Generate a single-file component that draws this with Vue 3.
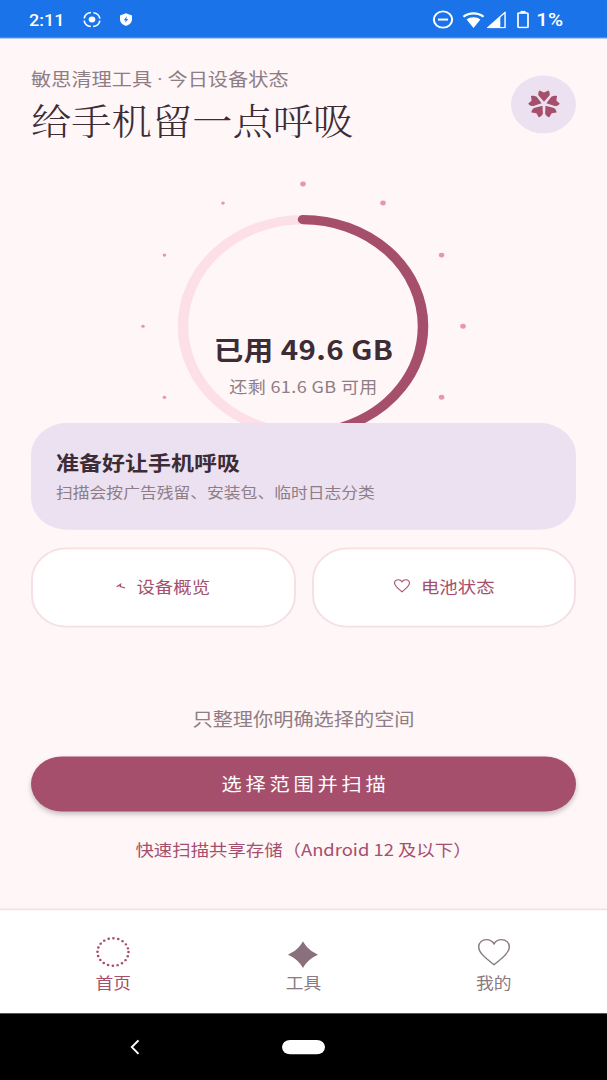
<script setup>
import { computed } from 'vue'

const usedGb = 49.6
const freeGb = 61.6

const ringRadius = 120
const circumference = 2 * Math.PI * ringRadius

const progressDash = computed(() => {
  const part = usedGb / (usedGb + freeGb)
  return `${circumference * part} ${circumference}`
})

// 12 dots around the ring, the ones on the right are a bit bigger
const dots = Array.from({ length: 12 }, (_, i) => {
  const angle = (i * 30 * Math.PI) / 180
  return {
    x: 303 + 160 * Math.sin(angle),
    y: 204 - 160 * Math.cos(angle),
    r: i < 6 ? 2.8 : 1.8,
  }
})

const petals = [0, 72, 144, 216, 288]

const tabs = [
  { key: 'home', label: '首页' },
  { key: 'tools', label: '工具' },
  { key: 'mine', label: '我的' },
]
</script>

<template>
  <div class="viewport">
    <div class="screen">
      <header class="status">
        <span class="status__time">2:11</span>
        <svg class="status__record" viewBox="0 0 24 24" fill="none" stroke="#fff" aria-hidden="true">
          <circle cx="12" cy="12" r="4" fill="#fff" stroke="none" />
          <circle cx="12" cy="12" r="9.5" stroke-width="2" stroke-dasharray="12 2.9" stroke-dashoffset="-1.4" />
        </svg>
        <svg class="status__shield" viewBox="0 0 24 24" aria-hidden="true">
          <path d="M12 1.5 3 5v6.5c0 5.4 3.8 9.7 9 11 5.200-1.300 9-5.600 9-11V5z" fill="#fff" />
          <path d="M13.200 6.500 8.800 13h2.700l-.8 4.500L15.200 11h-2.700z" fill="#1a73e8" />
        </svg>
        <span class="status__spacer"></span>
        <svg class="status__dnd" viewBox="0 0 24 24" aria-hidden="true">
          <circle cx="12" cy="12" r="10" fill="none" stroke="#fff" stroke-width="2.200" />
          <rect x="6.500" y="10.800" width="11" height="2.400" fill="#fff" />
        </svg>
        <svg class="status__wifi" viewBox="0 0 24 20" preserveAspectRatio="none" aria-hidden="true">
          <path d="M1.500 6.200C7.500 .8 16.500 .8 22.500 6.200" fill="none" stroke="#fff" stroke-width="2.400" />
          <path d="M12 19.500 4.800 9.300c4.300-3.300 10.100-3.300 14.400 0z" fill="#fff" />
        </svg>
        <svg class="status__signal" viewBox="0 0 20 20" aria-hidden="true">
          <path d="M19 1v18H1z" fill="none" stroke="#fff" stroke-width="1.500" />
          <path d="M14 6v13H1z" fill="#fff" />
        </svg>
        <svg class="status__battery" viewBox="0 0 12 20" aria-hidden="true">
          <rect x="3.500" y="0" width="5" height="3" fill="#fff" />
          <rect x="1" y="2.500" width="10" height="16.500" rx="1" fill="none" stroke="#fff" stroke-width="1.700" />
        </svg>
        <span class="status__percent">1%</span>
      </header>

      <main class="home">
        <section class="intro">
          <div class="intro__text">
            <p class="intro__sub">敏思清理工具<span class="intro__dot"> · </span>今日设备状态</p>
            <h1 class="intro__title">给手机留一点呼吸</h1>
          </div>
          <div class="intro__badge">
            <svg viewBox="-16 -16 32 32" aria-hidden="true">
              <path
                v-for="deg in petals"
                :key="deg"
                :transform="`rotate(${deg})`"
                d="M0-2.500-5.500-9.500C-6.200-11.500-5.500-14-4.500-15.200L0-13l4.500-2.200C5.500-14 6.200-11.500 5.500-9.500z"
                fill="#a64f6d"
              />
            </svg>
          </div>
        </section>

        <section class="ring">
          <svg class="ring__svg" viewBox="0 0 607 400" aria-hidden="true">
            <circle
              v-for="(dot, i) in dots"
              :key="i"
              :cx="dot.x"
              :cy="dot.y"
              :r="dot.r"
              fill="#e796b0"
            />
            <circle cx="303" cy="204" :r="ringRadius" fill="none" stroke="#fddfe7" stroke-width="10.500" />
            <circle
              cx="303"
              cy="204"
              :r="ringRadius"
              fill="none"
              stroke="#a64f6d"
              stroke-width="10.500"
              stroke-linecap="round"
              :stroke-dasharray="progressDash"
              transform="rotate(-90 303 204)"
            />
          </svg>
          <div class="ring__label">
            <div class="ring__used">已用 {{ usedGb }} GB</div>
            <div class="ring__free">还剩 {{ freeGb }} GB 可用</div>
          </div>
        </section>

        <section class="ready">
          <h2 class="ready__title">准备好让手机呼吸</h2>
          <p class="ready__sub">扫描会按广告残留、安装包、临时日志分类</p>
        </section>

        <div class="shortcuts">
          <button class="shortcut" type="button">
            <svg class="shortcut__spark" viewBox="0 0 10 10" aria-hidden="true">
              <path d="M.8 6 4.600 3.200 4.200 6 9.200 7.500" fill="none" stroke="#a64f6d" stroke-width="1.300" />
            </svg>
            <span>设备概览</span>
          </button>
          <button class="shortcut" type="button">
            <svg class="shortcut__heart" viewBox="0 0 24 24" aria-hidden="true">
              <path
                d="M12 21C5 15 2 11.800 2 8c0-3 2.300-5.200 5-5.200 2 0 4 1.200 5 3.200 1-2 3-3.200 5-3.200 2.700 0 5 2.200 5 5.200 0 3.800-3 7-10 13z"
                fill="none"
                stroke="#a64f6d"
                stroke-width="1.500"
              />
            </svg>
            <span>电池状态</span>
          </button>
        </div>

        <p class="note">只整理你明确选择的空间</p>
        <button class="scan" type="button">选择范围并扫描</button>
        <a class="quick">快速扫描共享存储（Android 12 及以下）</a>
      </main>

      <nav class="tabs">
        <div
          v-for="tab in tabs"
          :key="tab.key"
          class="tab"
          :class="{ 'tab--active': tab.key === 'home' }"
        >
          <div class="tab__icon">
            <svg v-if="tab.key === 'home'" width="36" height="36" viewBox="0 0 36 36" aria-hidden="true">
              <circle
                cx="18"
                cy="18"
                r="15.500"
                fill="none"
                stroke="#a64f6d"
                stroke-width="2.700"
                stroke-linecap="round"
                stroke-dasharray="0 4.870"
              />
            </svg>
            <svg v-else-if="tab.key === 'tools'" width="30" height="30" viewBox="0 0 30 30" aria-hidden="true">
              <path d="M15 0C18.500 7 23 11.500 30 15 23 18.500 18.500 23 15 30 11.500 23 7 18.500 0 15 7 11.500 11.500 7 15 0z" fill="#8a6f7c" />
            </svg>
            <svg v-else width="36" height="36" viewBox="0 0 24 24" aria-hidden="true">
              <path
                d="M12 21.500C5 15.500 1.800 12 1.800 8c0-3 2.300-5.300 5.200-5.300 2 0 4 1.200 5 3.200 1-2 3-3.200 5-3.200 2.900 0 5.200 2.300 5.200 5.300 0 4-3.200 7.500-10.200 13.500z"
                fill="none"
                stroke="#8a7a81"
                stroke-width="1"
              />
            </svg>
          </div>
          <span class="tab__label">{{ tab.label }}</span>
        </div>
      </nav>

      <footer class="sysbar">
        <svg class="sysbar__back" viewBox="0 0 10 18" aria-hidden="true">
          <path d="M8.500 1.500 1.800 9l6.700 7.500" fill="none" stroke="#fff" stroke-width="2" />
        </svg>
        <span class="sysbar__home"></span>
      </footer>
    </div>
  </div>
</template>

<style scoped>
.viewport {
  width: 607px;
  height: 1080px;
  overflow: hidden;
}

/* the capture is squeezed vertically, so the whole screen is laid out at 1215 and scaled */
.screen {
  display: flex;
  flex-direction: column;
  width: 607px;
  height: 1215px;
  background: #fef6f7;
  color: #3d2c35;
  font-family: 'Noto Sans CJK SC', 'Noto Sans', sans-serif;
  transform: scaleY(0.8889);
  transform-origin: top left;
}

.status {
  display: flex;
  flex: 0 0 43px;
  align-items: center;
  box-sizing: border-box;
  padding: 2px 44px 0 29px;
  background: #1a73e8;
  border-bottom: 1px solid #5b9bf0;
  color: #fff;
  font-family: Roboto, sans-serif;
  font-size: 18px;
  font-weight: 500;
}

.status__time {
  width: 34px;
}

.status__record {
  width: 20px;
  height: 20px;
  margin-left: 19px;
}

.status__shield {
  width: 16px;
  height: 16px;
  margin-left: 16px;
}

.status__spacer {
  flex: 1;
}

.status__dnd {
  width: 22px;
  height: 22px;
}

.status__wifi {
  width: 23px;
  height: 19px;
  margin-left: 8px;
}

.status__signal {
  width: 19px;
  height: 19px;
  margin-left: 2px;
}

.status__battery {
  width: 12px;
  height: 20px;
  margin-left: 11px;
}

.status__percent {
  margin-left: 7px;
  font-size: 20.5px;
  font-weight: 500;
}

.home {
  display: flex;
  flex: 1;
  flex-direction: column;
  min-height: 0;
  padding: 0 31px;
}

.intro {
  display: flex;
  flex: 0 0 120px;
  align-items: center;
  justify-content: space-between;
  box-sizing: border-box;
  padding-top: 32px;
}

.intro__sub {
  height: 28px;
  margin: 0;
  color: #8f7d85;
  font-size: 20.2px;
  line-height: 28px;
}

.intro__dot {
  font-family: Roboto, sans-serif;
  white-space: pre;
}

.intro__title {
  margin: 4px 0 0;
  color: #3d2c35;
  font-family: 'Noto Serif CJK SC', 'Noto Sans CJK SC', serif;
  font-size: 40.3px;
  font-weight: 300;
  line-height: 56px;
}

.intro__badge {
  display: flex;
  align-items: center;
  justify-content: center;
  width: 65px;
  height: 65px;
  margin-top: -4px;
  border-radius: 50%;
  background: #ebe1f1;
}

.intro__badge svg {
  width: 32px;
  height: 32px;
}

.ring {
  position: relative;
  flex: 0 0 313px;
  margin: 0 -31px;
  overflow: hidden;
}

.ring__svg {
  display: block;
  width: 607px;
  height: 400px;
}

.ring__label {
  position: absolute;
  top: 209px;
  left: 0;
  width: 100%;
  text-align: center;
}

.ring__used {
  color: #3d2c35;
  font-size: 29.5px;
  font-weight: 700;
  line-height: 40px;
  letter-spacing: 0.4px;
}

.ring__free {
  margin-top: 9px;
  color: #8f7d85;
  font-size: 18px;
  line-height: 26px;
  letter-spacing: 0.4px;
}

.ready {
  box-sizing: border-box;
  height: 120px;
  padding: 28px 25px 0;
  border-radius: 36px;
  background: #ebe1f1;
}

.ready__title {
  margin: 0;
  color: #3d2c35;
  font-size: 23px;
  font-weight: 700;
  line-height: 32px;
}

.ready__sub {
  margin: 5px 0 0;
  color: #8f7d85;
  font-size: 16.8px;
  line-height: 24px;
}

.shortcuts {
  display: grid;
  grid-template-columns: 1fr 1fr;
  gap: 16px;
  margin-top: 20px;
}

.shortcut {
  display: flex;
  align-items: center;
  justify-content: center;
  gap: 10px;
  height: 89.5px;
  padding: 0 0 4px;
  border: 2px solid #f6e0e4;
  border-radius: 36px;
  background: #fff;
  color: #a64f6d;
  font-family: inherit;
  font-size: 18.4px;
}

.shortcut__spark {
  width: 10px;
  height: 10px;
}

.shortcut__heart {
  width: 18px;
  height: 18px;
}

.note {
  margin: 90px 0 0;
  color: #8f7d85;
  font-size: 20.2px;
  line-height: 26px;
  text-align: center;
}

.scan {
  height: 62px;
  margin-top: 29px;
  padding: 0 0 0 4px;
  border: 0;
  border-radius: 31px;
  background: #a64f6d;
  box-shadow: 0 3px 6px rgb(61 44 53 / 0.28);
  color: #fff;
  font-family: inherit;
  font-size: 20.2px;
  letter-spacing: 3.800px;
}

.quick {
  margin-top: 29px;
  color: #a64f6d;
  font-size: 18.4px;
  line-height: 26px;
  text-align: center;
}

.tabs {
  display: grid;
  flex: 0 0 118.5px;
  grid-template-columns: repeat(3, 1fr);
  box-sizing: border-box;
  padding: 29px 18px 0;
  border-top: 2px solid #f6e0e4;
  background: #fff;
}

.tab {
  display: flex;
  flex-direction: column;
  align-items: center;
  color: #8a7a81;
}

.tab--active {
  color: #a64f6d;
}

.tab__icon {
  display: flex;
  align-items: flex-end;
  justify-content: center;
  height: 36px;
}

.tab__label {
  margin-top: 4px;
  font-size: 17.800px;
  line-height: 24px;
}

.sysbar {
  position: relative;
  display: flex;
  flex: 0 0 75px;
  align-items: center;
  justify-content: center;
  background: #000;
}

.sysbar__back {
  position: absolute;
  left: 130px;
  top: 29px;
  width: 10px;
  height: 18px;
}

.sysbar__home {
  width: 43px;
  height: 16px;
  border-radius: 8px;
  background: #fff;
}
</style>

<style>
html,
body {
  margin: 0;
  overflow: hidden;
  background: #000;
}
</style>
